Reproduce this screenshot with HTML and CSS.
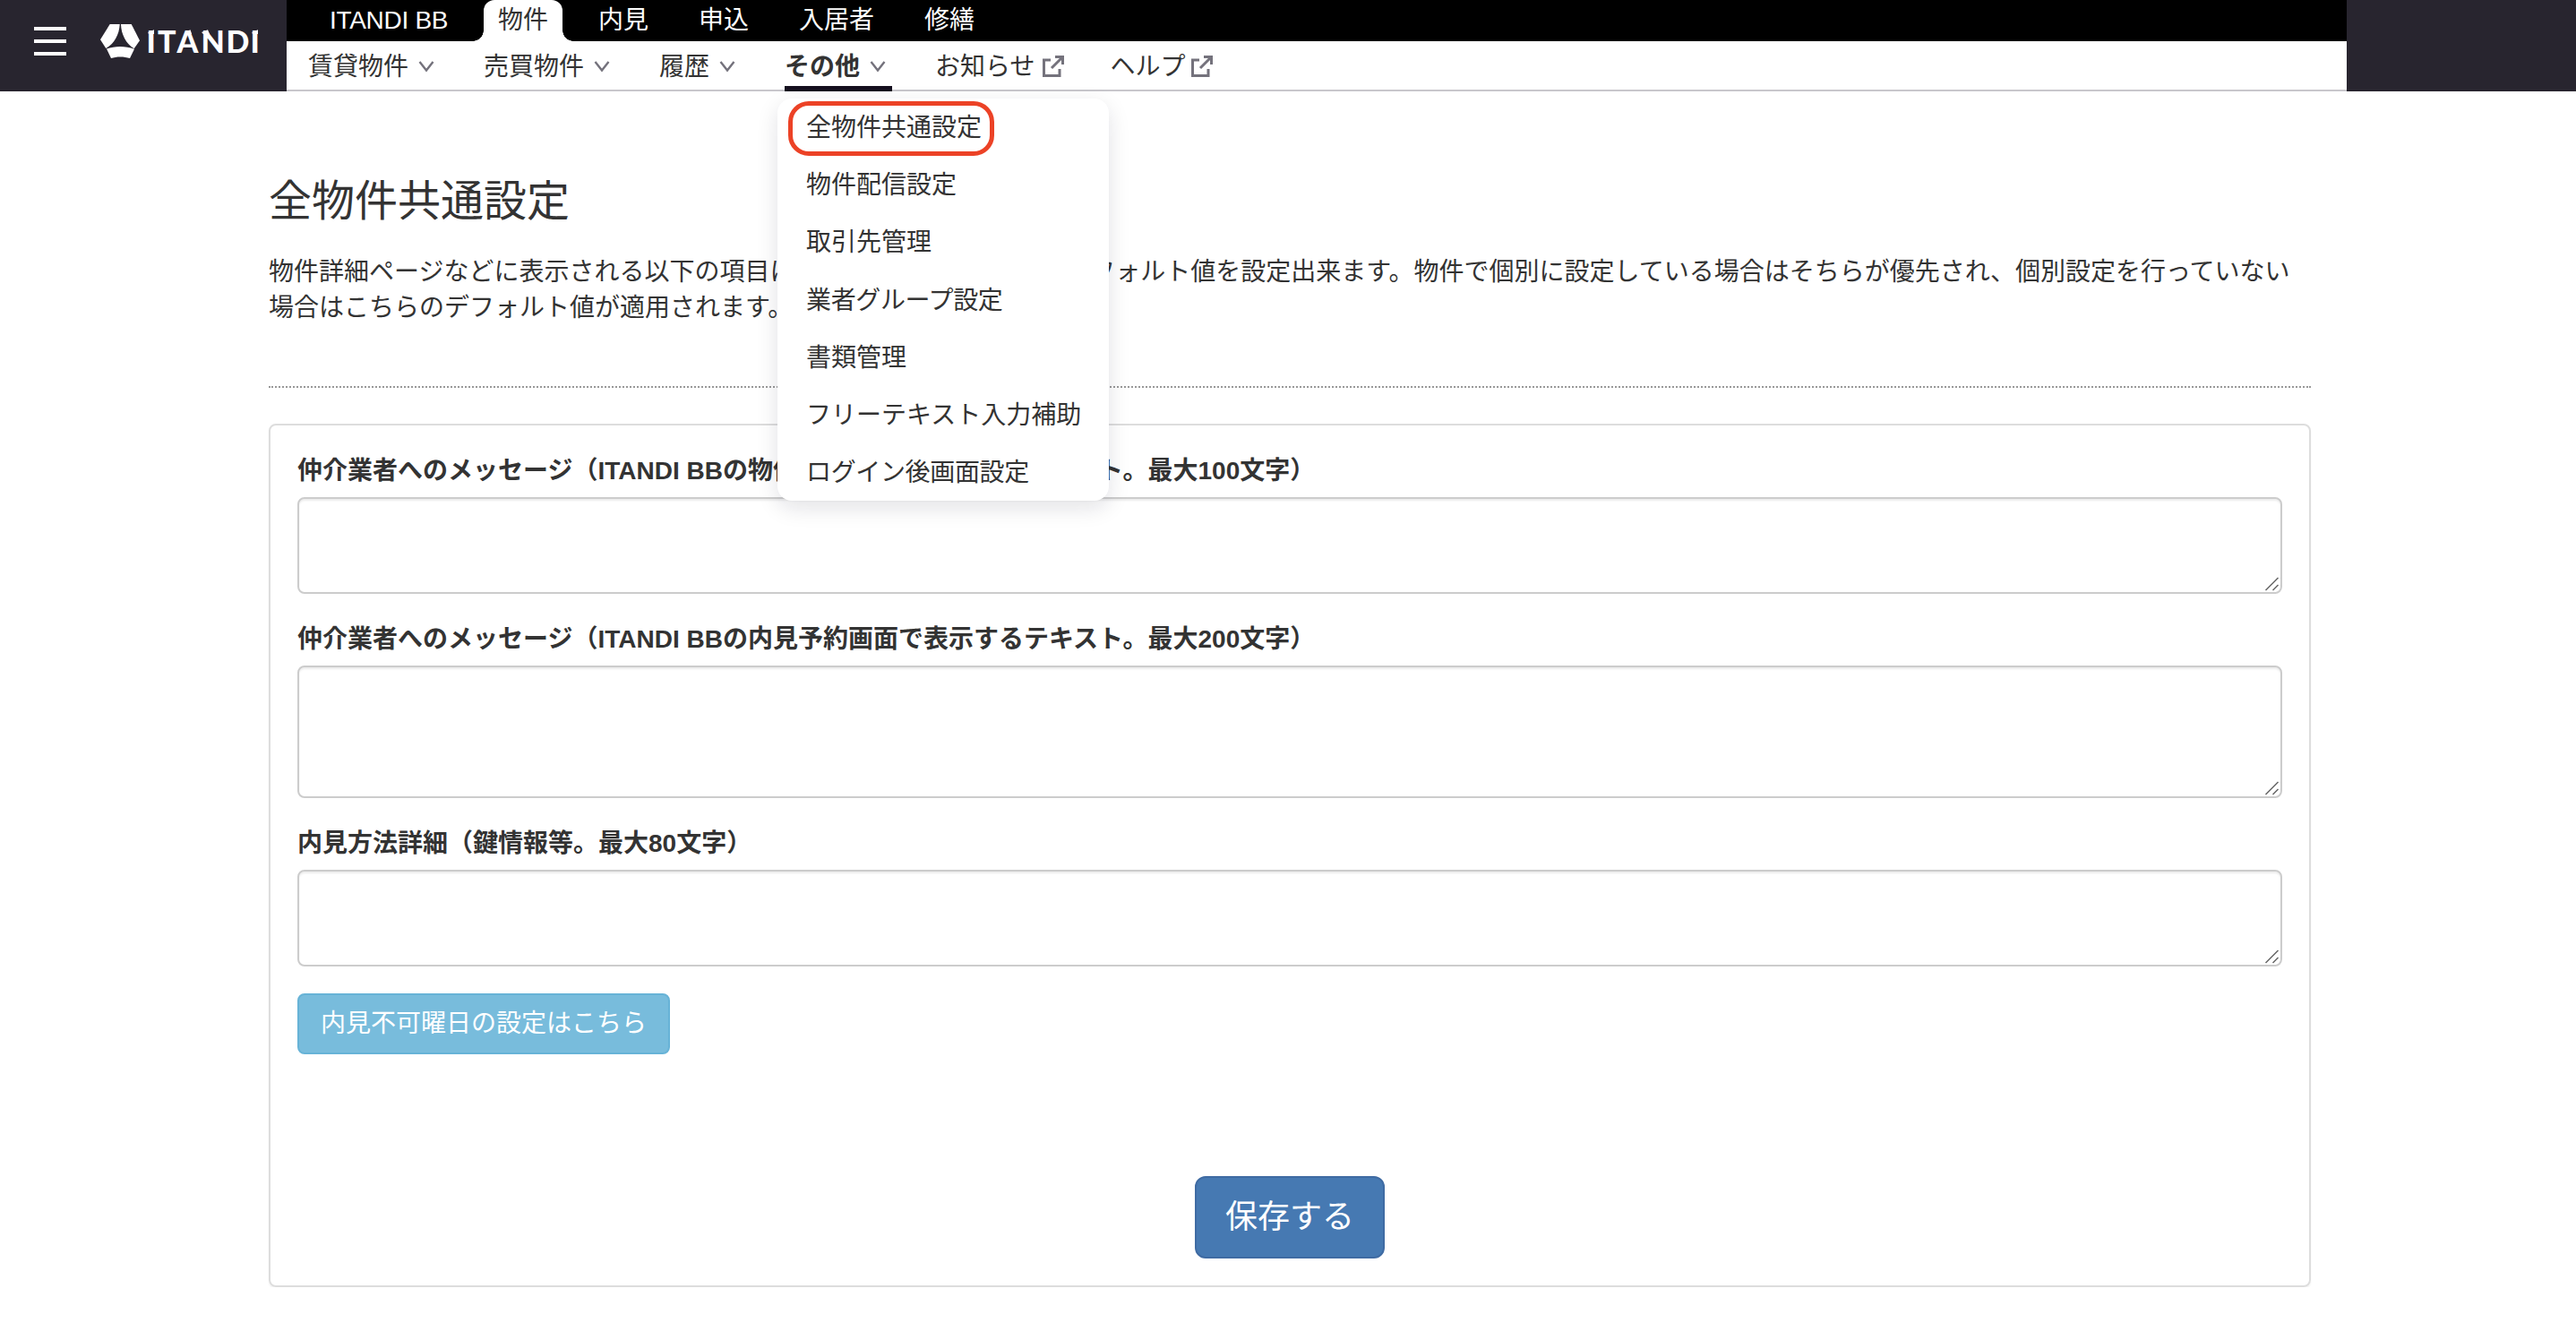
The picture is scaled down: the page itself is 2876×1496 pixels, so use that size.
FILE: index.html
```html
<!DOCTYPE html>
<html lang="ja">
<head>
<meta charset="utf-8">
<title>全物件共通設定</title>
<link rel="stylesheet" href="styles.css">
</head>
<body>
<svg class="defs" width="0" height="0" aria-hidden="true">
  <symbol id="chevron" viewBox="0 0 24 24"><path d="M4.500 8L12 17.500L19.500 8" fill="none" stroke="#74727c" stroke-width="2.400"/></symbol>
  <symbol id="external" viewBox="0 0 24 24"><path d="M9 5H1.500V22.500H19V15M14 1.500H22.500V10M22 2L10 14" fill="none" stroke="#74727c" stroke-width="3"/></symbol>
  <symbol id="grip" viewBox="0 0 18 18"><path d="M1.500 16L15.500 2M9.500 16L15.500 10" fill="none" stroke="#666" stroke-width="1.500"/></symbol>
</svg>
<header class="header">
  <div class="brand">
    <div class="burger"><i></i><i></i><i></i></div>
    <svg class="logo" viewBox="0 0 180 40" aria-label="ITANDI">
      <g fill="#fff">
        <path d="M10.700 1H21.700C21.300 12 15.500 23 6.300 28L0 18.300Z"/>
        <path d="M23 1H34.700L44 19.300L37.700 28.300C28.500 23 23.300 12 23 1Z"/>
        <path d="M7 28.500C16.500 25 28 25 38 28.800L33 39C27 37 18 36.800 12 39Z"/>
        <path d="M53.300 10L60 7.300V12H54ZM95 10L100.500 7.300L102 12H94ZM113 10L120 7.300L122 12H115ZM169.300 10L176 7.300V12H170Z"/>
      </g>
      <text class="wordmark" y="33.300" x="51.600 64 85.400 112.600 140.600 167.600">ITANDI</text>
    </svg>
  </div>
  <div class="navs">
    <nav class="tabs">
      <a class="product">ITANDI BB</a><a class="tab-on">物件</a><a>内見</a><a>申込</a><a>入居者</a><a>修繕</a>
    </nav>
    <nav class="subnav">
      <a>賃貸物件<svg class="chev"><use href="#chevron"/></svg></a>
      <a>売買物件<svg class="chev"><use href="#chevron"/></svg></a>
      <a>履歴<svg class="chev"><use href="#chevron"/></svg></a>
      <div class="open">
        <a class="current">その他<svg class="chev"><use href="#chevron"/></svg></a>
        <ul class="menu">
          <li class="picked">全物件共通設定</li>
          <li>物件配信設定</li>
          <li>取引先管理</li>
          <li class="tight">業者グループ設定</li>
          <li>書類管理</li>
          <li>フリーテキスト入力補助</li>
          <li class="tight">ログイン後画面設定</li>
        </ul>
      </div>
      <a>お知らせ<svg class="ext"><use href="#external"/></svg></a>
      <a class="help">ヘルプ<svg class="ext"><use href="#external"/></svg></a>
    </nav>
  </div>
</header>
<main class="page">
  <h1>全物件共通設定</h1>
  <p class="lead">物件詳細ページなどに表示される以下の項目に<span class="tight">ついて、全物件共通での</span>デフォルト値を設定出来ます。物件で個別に設定している場合はそちらが優先され、個別設定を行っていない<br>場合はこちらのデフォルト値が適用されます。</p>
  <form class="panel">
    <label for="m1">仲介業者へのメッセージ（ITANDI BBの物件詳細画面で表示するテキスト。最大100文字）</label>
    <div class="field"><textarea id="m1"></textarea><svg class="grip"><use href="#grip"/></svg></div>
    <label for="m2">仲介業者へのメッセージ（ITANDI BBの内見予約画面で表示するテキスト。最大200文字）</label>
    <div class="field tall"><textarea id="m2"></textarea><svg class="grip"><use href="#grip"/></svg></div>
    <label for="m3">内見方法詳細（鍵情報等。最大80文字）</label>
    <div class="field"><textarea id="m3"></textarea><svg class="grip"><use href="#grip"/></svg></div>
    <button type="button" class="info">内見不可曜日の設定はこちら</button>
    <button type="button" class="save">保存する</button>
  </form>
</main>
</body>
</html>
```
FILE: styles.css
```css
*, *::before, *::after { box-sizing: border-box; }
body {
  margin: 0;
  background: #fff;
  color: #333;
  font: 28px/40px "Liberation Sans", "Noto Sans CJK JP", sans-serif;
}
.defs { position: absolute; }

.header { display: flex; height: 102px; background: #28252f; }
.brand { display: flex; width: 320px; padding: 26px 0 0 38px; }
.burger { display: flex; flex-direction: column; gap: 10px; width: 36px; margin: 4px 38px 0 0; }
.burger i { height: 4px; background: #fff; }
.logo { width: 180px; height: 40px; }
.wordmark { font: 900 34px Lato, sans-serif; fill: #fff; }

.navs { width: 2300px; background: #fff; }
.tabs { display: flex; gap: 56px; height: 46px; padding-left: 48px; background: #000; color: #fff; line-height: 46px; }
.product { width: 132px; letter-spacing: -.3px; white-space: nowrap; }
.tab-on {
  position: relative;
  margin: 0 -16px;
  padding: 0 16px;
  border-radius: 12px 12px 0 0;
  background: #fff;
  color: #333;
}
.tab-on::before, .tab-on::after { content: ""; position: absolute; bottom: 0; width: 12px; height: 12px; }
.tab-on::before { right: 100%; background: radial-gradient(circle at 0 0, #000 11.500px, #fff 12px); }
.tab-on::after { left: 100%; background: radial-gradient(circle at 100% 0, #000 11.500px, #fff 12px); }

.subnav { display: flex; gap: 48px; height: 56px; padding-left: 24px; border-bottom: 2px solid #c8c7cc; line-height: 58px; }
.subnav a { display: flex; height: 56px; }
.chev { width: 24px; height: 24px; margin: 15px 4px 0 8px; }
.ext { width: 24px; height: 24px; margin: 16px 4px 0 8px; }
.help .ext { margin-left: 6px; }
.open { position: relative; }
.current { border-bottom: 6px solid #15101f; font-weight: 700; }
.menu {
  position: absolute;
  z-index: 2;
  top: 64px;
  left: -8px;
  width: 370px;
  height: 449px;
  margin: 0;
  padding: 0 32px;
  border-radius: 16px;
  background: #fff;
  box-shadow: 0 8px 24px rgba(20, 20, 40, .12);
  list-style: none;
}
.menu li { height: 64.200px; line-height: 66px; white-space: nowrap; }
.tight { letter-spacing: -.36px; }
.picked { position: relative; }
.picked::after {
  content: "";
  position: absolute;
  top: 3px;
  left: -20px;
  width: 230px;
  height: 61px;
  border: 5px solid #ec4226;
  border-radius: 23px;
}

.page { width: 2280px; margin: 0 0 0 300px; padding-top: 95px; }
h1 { margin: 0; font-size: 48px; font-weight: 400; line-height: 56px; }
.lead { margin: 0; padding: 31px 0 67px; border-bottom: 2px dotted #999; white-space: nowrap; }
.panel {
  display: flex;
  flex-direction: column;
  align-items: flex-start;
  height: 964px;
  margin-top: 40px;
  padding: 31px 30px 30px;
  border: 2px solid #ddd;
  border-radius: 8px;
  box-shadow: 0 2px 2px rgba(0, 0, 0, .05);
}
label { margin-bottom: 9px; font-weight: 700; }
.field { position: relative; width: 2216px; height: 108px; margin-bottom: 31px; }
.tall { height: 148px; }
textarea {
  display: block;
  width: 100%;
  height: 100%;
  border: 2px solid #ccc;
  border-radius: 8px;
  box-shadow: inset 0 2px 2px rgba(0, 0, 0, .075);
  background: #fff;
  resize: none;
}
.grip { position: absolute; right: 2px; bottom: 2px; width: 18px; height: 18px; }
button { font: inherit; color: #fff; }
.info { width: 416px; height: 68px; margin-top: -1px; padding: 0; border: 2px solid #67b3d7; border-radius: 8px; background: #78bcdc; }
.save { align-self: center; width: 212px; height: 92px; margin-top: 136px; padding: 0; border: 2px solid #3f6ba3; border-radius: 12px; background: #4679b2; font-size: 36px; }
```
